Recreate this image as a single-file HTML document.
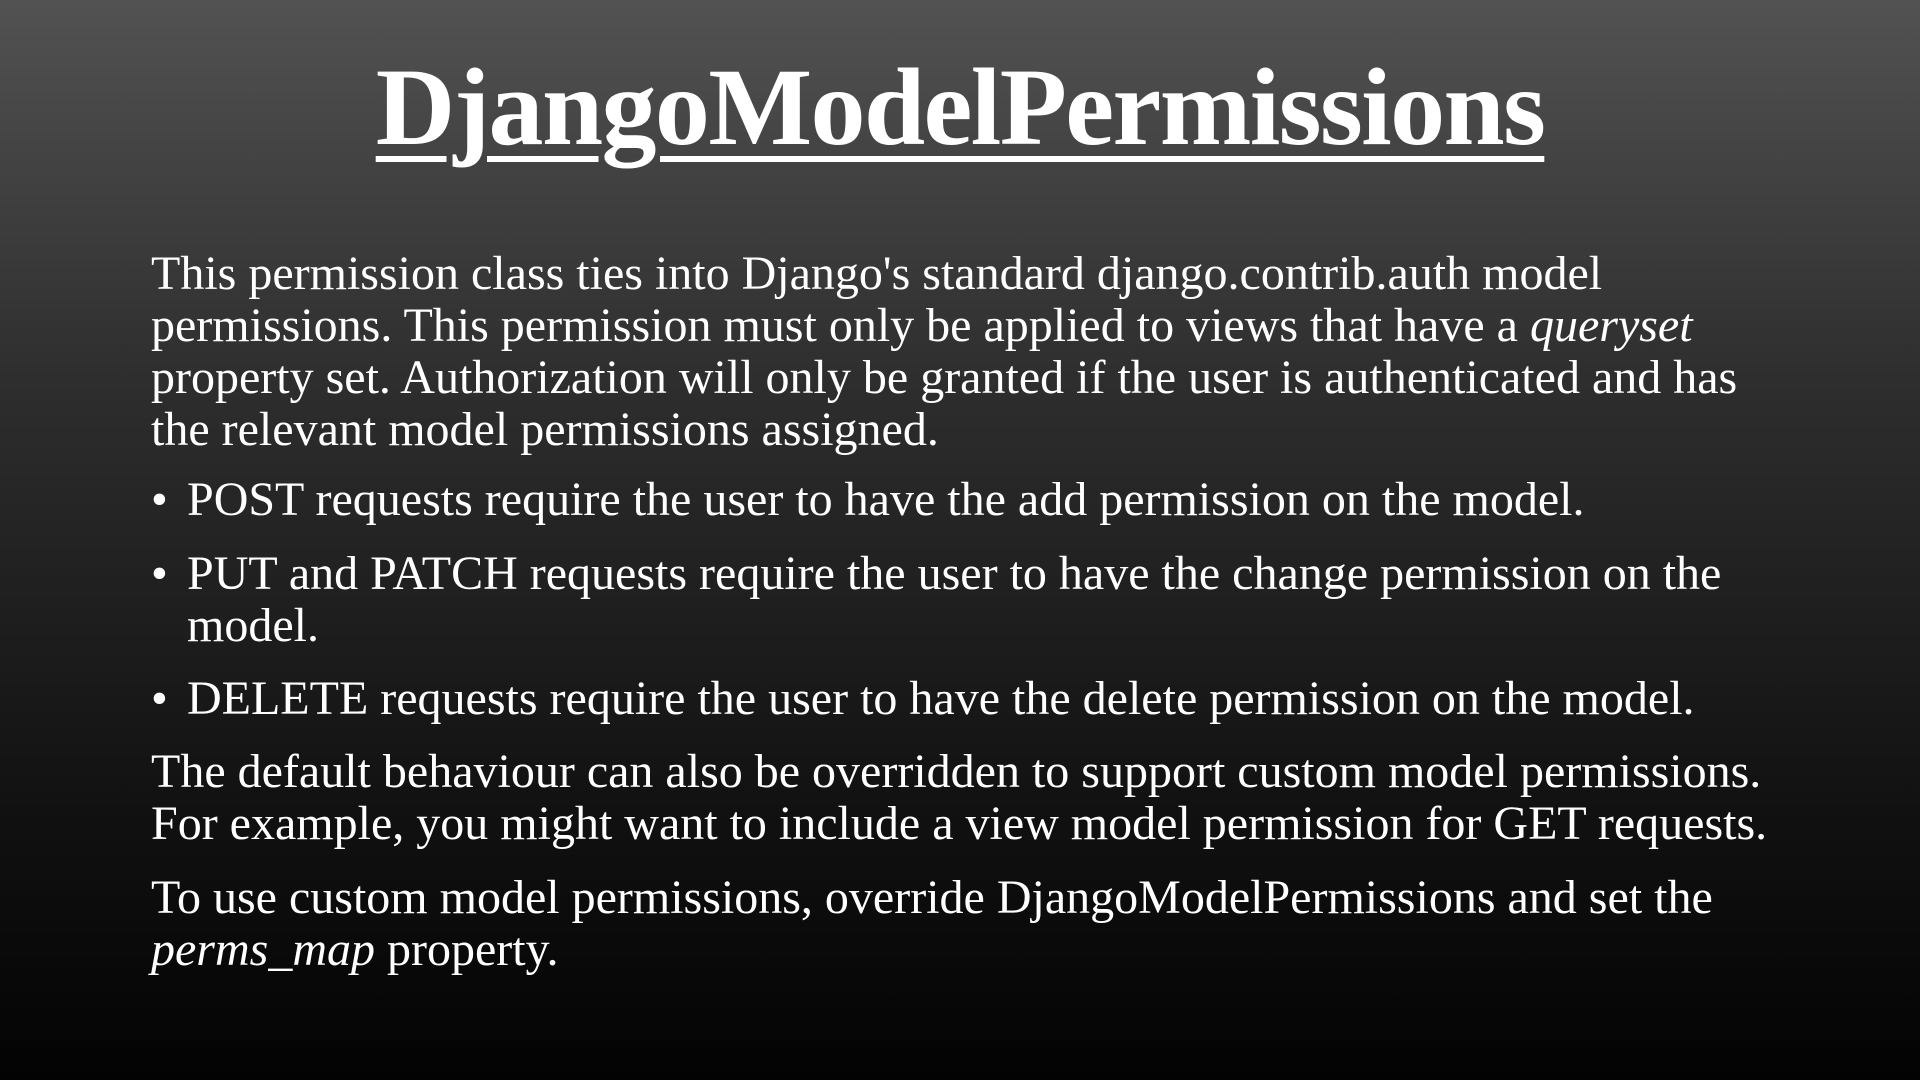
<!DOCTYPE html>
<html><head><meta charset="utf-8"><style>
html,body{margin:0;padding:0}
body{width:1920px;height:1080px;overflow:hidden;background:linear-gradient(to bottom,#525252 0%,#2e2e2e 35%,#111 75%,#030303 100%);font-family:"Liberation Serif",serif;color:#fff;position:relative}
.l{position:absolute;left:151px;font-size:48px;line-height:52px;white-space:nowrap}
.b{left:187px}
.d{position:absolute;left:151px;font-size:48px;line-height:52px}
h1{position:absolute;top:42px;left:0;width:1920px;text-align:center;margin:0;font-size:110px;line-height:130px;font-weight:bold;text-decoration:underline;text-decoration-thickness:6px;text-underline-offset:12px;letter-spacing:-1.6px}
</style></head><body>
<h1>DjangoModelPermissions</h1>
<div class="l" style="top:248px">This permission class ties into Django's standard django.contrib.auth model</div>
<div class="l" style="top:300px">permissions. This permission must only be applied to views that have a <i>queryset</i></div>
<div class="l" style="top:352px">property set. Authorization will only be granted if the user is authenticated and has</div>
<div class="l" style="top:404px">the relevant model permissions assigned.</div>
<div class="d" style="top:474px">•</div>
<div class="l b" style="top:474px">POST requests require the user to have the add permission on the model.</div>
<div class="d" style="top:548px">•</div>
<div class="l b" style="top:548px">PUT and PATCH requests require the user to have the change permission on the</div>
<div class="l b" style="top:600px">model.</div>
<div class="d" style="top:673px">•</div>
<div class="l b" style="top:673px">DELETE requests require the user to have the delete permission on the model.</div>
<div class="l" style="top:746px">The default behaviour can also be overridden to support custom model permissions.</div>
<div class="l" style="top:798px">For example, you might want to include a view model permission for GET requests.</div>
<div class="l" style="top:872px">To use custom model permissions, override DjangoModelPermissions and set the</div>
<div class="l" style="top:924px"><i>perms_map</i> property.</div>
</body></html>
